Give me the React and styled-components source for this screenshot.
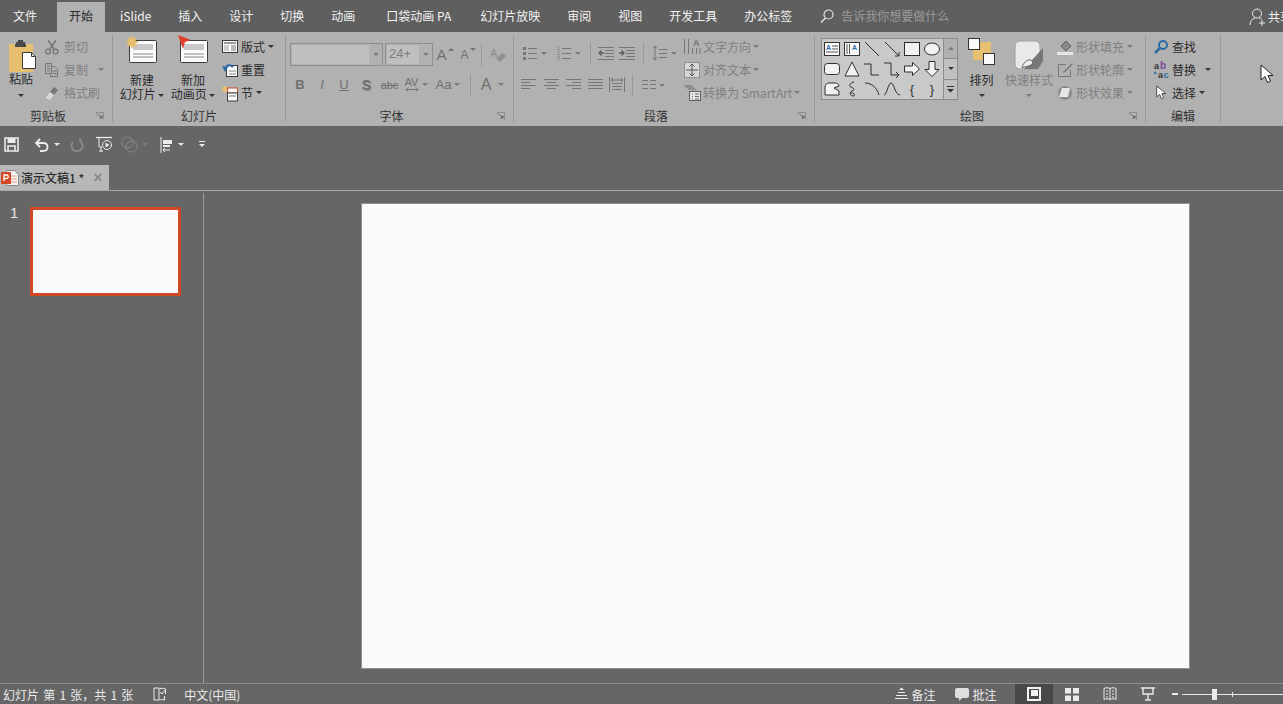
import React from "react";
import styled, { createGlobalStyle } from "styled-components";

const GlobalStyle = createGlobalStyle`
  html, body {
    margin: 0;
    padding: 0;
    height: 704px;
    overflow: hidden;
    background: #666666;
  }
  body {
    font-family: "Noto Sans CJK SC", "Liberation Sans", sans-serif;
    font-size: 12px;
  }
  svg { display: block; flex: none; }
`;

const Page = styled.div`
  position: relative;
  display: flex;
  flex-direction: column;
  width: 1283px;
  height: 704px;
  overflow: hidden;
  background: #666666;
`;

const TabBar = styled.div`
  display: flex;
  align-items: flex-end;
  height: 32px;
  gap: 3px;
  padding-left: 1px;
  background: #5f5f5f;
  flex: none;
`;

const Tab = styled.div`
  height: 30px;
  line-height: 27px;
  padding: 0 12px;
  margin-left: ${(p) => p.$ml || 0}px;
  margin-right: ${(p) => p.$mr || 0}px;
  color: ${(p) => (p.$active ? "#262626" : "#f2f2f2")};
  background: ${(p) => (p.$active ? "#b1b1b1" : "transparent")};
  white-space: nowrap;
`;

const SearchBox = styled.div`
  display: flex;
  align-items: center;
  gap: 7px;
  margin-left: 13px;
  height: 30px;
  padding-bottom: 3px;
  box-sizing: border-box;
  color: #9b9b9b;
`;

const Share = styled.div`
  display: flex;
  align-items: center;
  gap: 2px;
  margin-left: auto;
  margin-right: -10px;
  height: 30px;
  padding-bottom: 1px;
  box-sizing: border-box;
  color: #f2f2f2;
  width: 44px;
  white-space: nowrap;
`;

const Ribbon = styled.div`
  display: flex;
  height: 94px;
  flex: none;
  background: #b1b1b1;
  color: #2b2b2b;
`;

const Group = styled.div`
  display: flex;
  flex-direction: column;
  width: ${(p) => p.$w}px;
  height: 87px;
  margin-top: 3px;
  border-right: 1px solid #9a9a9a;
  box-sizing: border-box;
  flex: none;
`;

const GroupBody = styled.div`
  display: flex;
  height: 72px;
  flex: none;
`;

const GroupFoot = styled.div`
  display: flex;
  align-items: center;
  height: 15px;
  padding-top: 2px;
  box-sizing: border-box;
`;

const GroupLabel = styled.div`
  flex: 1;
  text-align: center;
  line-height: 15px;
  color: #333333;
`;

const Launcher = styled.div`
  display: flex;
  align-items: center;
  justify-content: flex-start;
  width: ${(p) => (p.$none ? 0 : 16)}px;
`;

const LargeBtn = styled.div`
  display: flex;
  flex-direction: column;
  align-items: center;
  width: ${(p) => p.$w}px;
  margin-left: ${(p) => p.$ml || 0}px;
  padding-right: ${(p) => p.$pr || 0}px;
  box-sizing: border-box;
  flex: none;
  color: ${(p) => (p.$muted ? "#7f7f7f" : "#2b2b2b")};
`;

const LargeIcon = styled.div`
  height: ${(p) => p.$h || 30}px;
  display: flex;
  align-items: flex-end;
  justify-content: center;
`;

const LargeText = styled.div`
  line-height: 14px;
  margin-top: ${(p) => p.$mt ?? 8}px;
  text-align: center;
  white-space: nowrap;
`;

const Col = styled.div`
  display: flex;
  flex-direction: column;
  width: ${(p) => (p.$w ? `${p.$w}px` : "auto")};
  flex: none;
  padding-left: ${(p) => p.$pl || 0}px;
  box-sizing: border-box;
`;

const SmallRow = styled.div`
  display: flex;
  align-items: center;
  height: 23px;
  gap: ${(p) => p.$gap ?? 3}px;
  white-space: nowrap;
  color: ${(p) => (p.$muted ? "#7f7f7f" : "#2b2b2b")};
`;

const IconSlot = styled.div`
  display: flex;
  align-items: center;
  justify-content: center;
  width: ${(p) => p.$w || 16}px;
  flex: none;
`;

const Caret = styled.span`
  display: inline-block;
  flex: none;
  width: 0;
  height: 0;
  vertical-align: middle;
  margin-left: ${(p) => p.$ml || 0}px;
  border-left: 3px solid transparent;
  border-right: 3px solid transparent;
  border-top: 3px solid ${(p) => (p.$muted ? "#7a7a7a" : p.$light ? "#e6e6e6" : "#333333")};
`;

const ToolRow = styled.div`
  display: flex;
  align-items: center;
  height: ${(p) => p.$h || 23}px;
  margin-top: ${(p) => p.$mt || 0}px;
  padding-left: ${(p) => p.$pl || 0}px;
`;

const ToolBtn = styled.div`
  display: flex;
  align-items: center;
  justify-content: center;
  gap: ${(p) => p.$gap ?? 3}px;
  width: ${(p) => p.$w || 22}px;
  height: 100%;
  flex: none;
  color: #707070;
  font-family: "Liberation Sans", sans-serif;
  font-size: ${(p) => p.$fs || 13}px;
  font-weight: ${(p) => (p.$bold ? 700 : 400)};
  font-style: ${(p) => (p.$italic ? "italic" : "normal")};
  text-decoration: ${(p) => (p.$under ? "underline" : p.$strike ? "line-through" : "none")};
  text-shadow: ${(p) => (p.$shadow ? "1px 1px 1px #8a8a8a" : "none")};
`;

const GrowMark = styled.span`
  display: flex;
  margin-top: -9px;
`;

const AvStack = styled.span`
  display: flex;
  flex-direction: column;
  align-items: center;
  font-size: 11px;
  line-height: 10px;
`;

const ToolSep = styled.div`
  width: 1px;
  height: 22px;
  margin: 0 ${(p) => p.$m ?? 5}px;
  background: #9a9a9a;
  flex: none;
`;

const Combo = styled.div`
  display: flex;
  width: ${(p) => p.$w}px;
  height: 23px;
  margin-right: ${(p) => p.$mr || 0}px;
  border: 1px solid #8e8e8e;
  box-sizing: border-box;
  flex: none;
`;

const ComboField = styled.div`
  flex: 1;
  margin: 1px;
  background: #bfbfbf;
  color: #7c7c7c;
  font-family: "Liberation Sans", sans-serif;
  font-size: 13px;
  line-height: 18px;
  padding-left: 2px;
`;

const ComboArrow = styled.div`
  display: flex;
  align-items: center;
  justify-content: center;
  width: 12px;
`;

const Gallery = styled.div`
  display: flex;
  height: 62px;
  margin: 3px 0 0 6px;
  border: 1px solid #8c8c8c;
  box-sizing: border-box;
  width: 137px;
  flex: none;
`;

const GalleryGrid = styled.div`
  display: grid;
  grid-template-columns: repeat(6, 20px);
  grid-auto-rows: 20px;
  background: #c9c9c9;
  width: 121px;
`;

const GalleryCell = styled.div`
  display: flex;
  align-items: center;
  justify-content: center;
  color: #2e2e2e;
  font-family: "Liberation Sans", sans-serif;
  font-size: 13px;
`;

const GalleryScroll = styled.div`
  display: flex;
  flex-direction: column;
  flex: 1;
  border-left: 1px solid #8c8c8c;
`;

const ScrollCell = styled.div`
  flex: 1;
  display: flex;
  align-items: center;
  justify-content: center;
  background: ${(p) => (p.$off ? "#b1b1b1" : "#c0c0c0")};
  border-top: ${(p) => (p.$first ? "none" : "1px solid #8c8c8c")};
`;

const MouseCursor = styled.div`
  position: absolute;
  left: 1260px;
  top: 64px;
`;

const QuickBar = styled.div`
  display: flex;
  align-items: center;
  height: 37px;
  flex: none;
  padding-left: 4px;
`;

const QuickIcon = styled.div`
  display: flex;
  align-items: center;
  margin-left: ${(p) => p.$ml || 0}px;
  gap: ${(p) => p.$gap || 0}px;
`;

const DocStrip = styled.div`
  display: flex;
  height: 28px;
  flex: none;
  padding-top: 2px;
  box-sizing: border-box;
  border-bottom: 1px solid #a8a8a8;
`;

const DocTab = styled.div`
  display: flex;
  align-items: center;
  width: 109px;
  height: 25px;
  background: #b8b8b8;
  color: #2e2e2e;
  padding-left: 1px;
  box-sizing: border-box;
  font-weight: 500;
`;

const DocName = styled.span`
  margin-left: 2px;
  white-space: nowrap;
`;

const DocClose = styled.span`
  margin-left: 9px;
  color: #8a8a8a;
  font-family: "Liberation Sans", sans-serif;
  font-size: 16px;
  font-weight: 700;
`;

const Main = styled.div`
  display: flex;
  flex: 1;
  min-height: 0;
`;

const ThumbPane = styled.div`
  display: flex;
  width: 193px;
  margin-top: 2px;
  border-right: 1px solid #9c9c9c;
  padding: 14px 0 0 10px;
  flex: none;
`;

const ThumbNumber = styled.div`
  width: 20px;
  color: #e8e8e8;
  font-family: "Liberation Sans", sans-serif;
  font-size: 15px;
  line-height: 16px;
  margin-top: -2px;
`;

const Thumb = styled.div`
  width: 151px;
  height: 89px;
  background: #fafafa;
  border: 3px solid #d24726;
  box-sizing: border-box;
`;

const Stage = styled.div`
  flex: 1;
  padding: 12px 0 0 157px;
`;

const Slide = styled.div`
  width: 829px;
  height: 466px;
  background: #fafafa;
  border: 1px solid #8f8f8f;
  box-sizing: border-box;
`;

const StatusBar = styled.div`
  display: flex;
  align-items: center;
  height: 21px;
  flex: none;
  padding-left: 3px;
  border-top: 1px solid #8a8a8a;
  color: #ececec;
  box-sizing: border-box;
  white-space: nowrap;
`;

const StatusItem = styled.div`
  display: flex;
  align-items: center;
  gap: 3px;
  margin-left: ${(p) => p.$ml || 0}px;
  word-spacing: ${(p) => p.$ws || 0}px;
`;

const ViewBtn = styled.div`
  display: flex;
  align-items: center;
  justify-content: center;
  width: 38px;
  height: 20px;
  margin-left: ${(p) => p.$ml || 0}px;
  background: ${(p) => (p.$active ? "#484848" : "transparent")};
`;

const ZoomMinus = styled.div`
  width: 6px;
  height: 2px;
  margin-left: 5px;
  background: #ededed;
  flex: none;
`;

const ZoomTrack = styled.div`
  position: relative;
  width: 101px;
  height: 1px;
  margin-left: 4px;
  background: #e8e8e8;
  flex: none;
`;

const ZoomThumb = styled.div`
  position: absolute;
  left: 30px;
  top: -5px;
  width: 5px;
  height: 11px;
  background: #ededed;
`;

const ZoomTick = styled.div`
  position: absolute;
  left: 50px;
  top: -2px;
  width: 1px;
  height: 5px;
  background: #e8e8e8;
`;

const G = "#767676";
const L = "#ececec";

const Svg = ({ w = 16, h = 16, children }) => (
  <svg width={w} height={h} viewBox={`0 0 ${w} ${h}`} fill="none">
    {children}
  </svg>
);

const LauncherIcon = () => (
  <Svg w={8} h={8}>
    <path d="M0.5 0.5h7v7M0.5 0.5v3M0.5 0.5h3" stroke="#8c8c8c" />
    <path d="M2.5 2.5l3 3M6 3.5V6H3.5" stroke="#555" />
  </Svg>
);

const PasteIcon = () => (
  <Svg w={30} h={33}>
    <rect x="3" y="4" width="24" height="28" fill="#e6c06f" />
    <path d="M10 4V2h2V0h5v2h2v2h1v3H9V4z" fill="#4a4a4a" />
    <path d="M16.5 12.5h9l4 4v12h-13z" fill="#fff" stroke="#3a3a3a" />
    <path d="M25.5 12.5v4h4" stroke="#3a3a3a" />
  </Svg>
);

const CutIcon = () => (
  <Svg>
    <path d="M4 1l6 9M12 1L6 10" stroke={G} strokeWidth="1.5" />
    <circle cx="4" cy="12.5" r="2.4" stroke={G} strokeWidth="1.3" />
    <circle cx="11.5" cy="12.5" r="2.4" stroke={G} strokeWidth="1.3" />
  </Svg>
);

const CopyIcon = () => (
  <Svg>
    <path d="M1.5 1.5h6v10h-6zM7.5 4.5h3l3 3v7h-7v-3" stroke={G} fill="#b1b1b1" />
    <path d="M3 4h3M3 6.5h3M3 9h3M8.5 9h4M8.5 11.5h4" stroke={G} />
  </Svg>
);

const BrushIcon = () => (
  <Svg>
    <path d="M10 2l4 3-4 5-4-3z" fill={G} />
    <path d="M6 7l4 3-4 5-5-2c2-1 3-3 5-6z" fill="#d8d8d8" />
  </Svg>
);

const SlideBase = () => (
  <>
    <rect x="5.5" y="5.5" width="27" height="22" rx="1" fill="#fafafa" stroke="#3c3c3c" />
    <rect x="9" y="9" width="20" height="6" fill="#c9c9c9" />
    <path d="M9 19h20M9 22h20" stroke="#8a8a8a" />
  </>
);

const NewSlideIcon = () => (
  <Svg w={36} h={30}>
    <SlideBase />
    <path d="M8 0l1.6 3.6L13 2l-1.6 3.6L15 7l-3.6 1.4L13 12 9.6 10.4 8 14l-1.6-3.6L3 12l1.6-3.6L1 7l3.6-1.4L3 2l3.4 1.6z" fill="#e6c06f" />
  </Svg>
);

const NewAnimIcon = () => (
  <Svg w={36} h={30}>
    <SlideBase />
    <path d="M3 0l13 5-6 2-2 7z" fill="#e2402b" />
  </Svg>
);

const LayoutIcon = () => (
  <Svg>
    <rect x="0.5" y="1.5" width="15" height="12" fill="#fafafa" stroke="#3a3a3a" />
    <rect x="2" y="3" width="12" height="2" fill="#9a9a9a" />
    <rect x="2" y="6" width="5" height="6" fill="#cfcfcf" />
    <path d="M9 7h5M9 9h5M9 11h5" stroke="#777" />
  </Svg>
);

const ResetIcon = () => (
  <Svg>
    <rect x="4.5" y="3.5" width="11" height="11" fill="#fafafa" stroke="#3a3a3a" />
    <path d="M7 9h7M7 12h7" stroke="#888" />
    <path d="M11 5c-3-3-6-2-7 1" stroke="#2b6aa5" strokeWidth="2" />
    <path d="M0 4l6 1-3 5z" fill="#2b6aa5" />
  </Svg>
);

const SectionIcon = () => (
  <Svg w={16} h={18}>
    <path d="M3 1l1 2 2-1-1 2 2 1-2 1 1 2-2-1-1 2-1-2-2 1 1-2-2-1 2-1-1-2 2 1z" fill="#e6c06f" />
    <rect x="5.5" y="4" width="10" height="5" fill="#fafafa" stroke="#c8502d" />
    <rect x="5.5" y="9" width="10" height="8" fill="#fafafa" stroke="#3a3a3a" />
    <path d="M7 12h7" stroke="#777" />
  </Svg>
);

const ClearIcon = () => (
  <Svg w={18} h={18}>
    <text x="1" y="11" fontSize="11" fill="#8a8a8a" fontFamily="Liberation Sans">A</text>
    <path d="M7 13l6-6 4 3-6 6z" fill="#8f8f8f" />
  </Svg>
);

const GrowIcon = ({ down }) => (
  <Svg w={6} h={4}>
    <path d={down ? "M0 0h6L3 3z" : "M0 3h6L3 0z"} fill={G} />
  </Svg>
);

const lines = (rows) => rows.map((d, i) => <path key={i} d={d} stroke={G} />);

const BulletIcon = () => (
  <Svg>
    {[3, 8, 13].map((y) => (
      <rect key={y} x="1" y={y - 1} width="3" height="3" fill={G} />
    ))}
    {lines(["M6 3.5h9", "M6 8.5h9", "M6 13.5h9"])}
  </Svg>
);

const NumberIcon = () => (
  <Svg>
    <text x="1" y="5" fontSize="5" fill={G} fontFamily="Liberation Sans">1</text>
    <text x="1" y="10" fontSize="5" fill={G} fontFamily="Liberation Sans">2</text>
    <text x="1" y="15" fontSize="5" fill={G} fontFamily="Liberation Sans">3</text>
    {lines(["M6 3.5h9", "M6 8.5h9", "M6 13.5h9"])}
  </Svg>
);

const IndentIcon = ({ out }) => (
  <Svg>
    {lines(["M0 2.5h16", "M7 5.5h9", "M7 8.5h9", "M7 11.5h9", "M0 14.5h16"])}
    <path d={out ? "M6 8H1M3.5 5.5L1 8l2.5 2.5" : "M0 8h5M2.5 5.5L5 8l-2.5 2.5"} stroke="#5d5d5d" strokeWidth="1.3" />
  </Svg>
);

const SpacingIcon = () => (
  <Svg>
    <path d="M3 1v14M1 3.5L3 1l2 2.5M1 12.5L3 15l2-2.5" stroke={G} />
    {lines(["M7 4.5h8", "M7 8.5h8", "M7 12.5h8"])}
  </Svg>
);

const AlignIcon = ({ rows }) => <Svg w={15} h={14}>{lines(rows)}</Svg>;

const DistributeIcon = () => (
  <Svg>
    <path d="M0.5 0v15M15.5 0v15" stroke={G} />
    {lines(["M3 6.5h10", "M3 9.5h10", "M3 12.5h10"])}
    <path d="M2 3h12M4 1L2 3l2 2M12 1l2 2-2 2" stroke={G} />
  </Svg>
);

const ColumnsIcon = () => (
  <Svg w={14} h={14}>
    {lines(["M0 2.5h6", "M8 2.5h6", "M0 6.5h6", "M8 6.5h6", "M0 10.5h6", "M8 10.5h6"])}
  </Svg>
);

const DirectionIcon = () => (
  <Svg w={18} h={18}>
    <text x="10" y="8" fontSize="9" fontWeight="700" fill={G} fontFamily="Liberation Sans">A</text>
    <path d="M1.5 1v15M5.5 1v15M9.5 10v6M13.5 10v6M17 10v6" stroke={G} />
  </Svg>
);

const TextAlignIcon = () => (
  <Svg w={18} h={18}>
    <rect x="1.5" y="1.5" width="15" height="15" fill="#d8d8d8" stroke={G} strokeDasharray="2 1" />
    <path d="M9 3v12M6.5 5.5L9 3l2.5 2.5M6.5 12.5L9 15l2.5-2.5" stroke="#555" />
    <path d="M3 9h12" stroke="#555" />
  </Svg>
);

const SmartArtIcon = () => (
  <Svg w={18} h={18}>
    <path d="M0 1h8l6 5H6z" fill="#8d8d8d" />
    <rect x="6.5" y="7.5" width="11" height="9" fill="#e8e8e8" stroke="#5f5f5f" />
    <path d="M9 10h1M12 10h4M9 12.5h1M12 12.5h4M9 15h1M12 15h4" stroke="#666" />
  </Svg>
);

const s = { stroke: "#2e2e2e", fill: "none" };
const shapes = [
  <><rect x="1.5" y="2.5" width="15" height="13" fill="#fafafa" stroke="#333" /><text x="3" y="10" fontSize="7" fontWeight="700" fill="#2b6aa5" fontFamily="Liberation Sans">A</text><path d="M9 6h6M9 9h6M3 12h12" stroke="#555" /></>,
  <><rect x="1.5" y="2.5" width="15" height="13" fill="#fafafa" stroke="#333" /><path d="M4 4v10M6.5 4v10" stroke="#555" /><text x="9" y="10" fontSize="7" fontWeight="700" fill="#2b6aa5" fontFamily="Liberation Sans">A</text></>,
  <path d="M2 2l14 14" {...s} />,
  <><path d="M2 2l14 14" {...s} /><path d="M16 12v4h-4" {...s} /></>,
  <rect x="1.5" y="2.5" width="15" height="13" fill="#f2f2f2" stroke="#2e2e2e" />,
  <ellipse cx="9" cy="9" rx="7.5" ry="6" fill="#f2f2f2" stroke="#2e2e2e" />,
  <rect x="1.5" y="3.5" width="15" height="11" rx="3" fill="#f2f2f2" stroke="#2e2e2e" />,
  <path d="M9 2L16 16H2z" fill="#f2f2f2" stroke="#2e2e2e" />,
  <path d="M1 4h7v11h8" {...s} />,
  <><path d="M1 3h7v12h7" {...s} /><path d="M13 12l3 3-3 3" {...s} /></>,
  <path d="M1.5 6h8V2.5l7 6.5-7 6.5V12h-8z" fill="#f2f2f2" stroke="#2e2e2e" />,
  <path d="M6 1.5h6v8h4l-7 7-7-7h4z" fill="#f2f2f2" stroke="#2e2e2e" />,
  <path d="M2 15V7c0-2 2-4 4-4h6c2 0 4 1 4 3l-5 2 5 3v4z" fill="#f2f2f2" stroke="#2e2e2e" />,
  <path d="M11 2C7 3 5 6 8 7s4 3 1 4-2 5 1 5 1-4-2-3" {...s} />,
  <path d="M2 3c7 0 12 5 14 12" {...s} />,
  <path d="M1 15C4 15 5 3 8 3s4 12 9 12" {...s} />,
  "{",
  "}",
];

const BucketIcon = () => (
  <Svg>
    <path d="M4 7l5-5 5 5-5 5z" fill="#8a8a8a" stroke="#5d5d5d" />
    <path d="M0 13h16v3H0z" fill="#e6e6e6" />
  </Svg>
);

const OutlineIcon = () => (
  <Svg>
    <path d="M13.5 8v6.5h-12v-12H9" stroke={G} />
    <path d="M15 1l1 1-8 8-2 1 1-2z" fill={G} />
  </Svg>
);

const EffectIcon = () => (
  <Svg>
    <circle cx="8" cy="8" r="7" fill="#8a8a8a" />
    <path d="M5 3h8l-2 9H2z" fill="#e8e8e8" />
  </Svg>
);

const ArrangeIcon = () => (
  <Svg w={28} h={28}>
    <rect x="5" y="4" width="18" height="18" fill="#e6c06f" />
    <rect x="0.5" y="0.5" width="11" height="11" fill="#fafafa" stroke="#333" />
    <rect x="15.5" y="15.5" width="11" height="11" fill="#fafafa" stroke="#333" />
  </Svg>
);

const QuickStyleIcon = () => (
  <Svg w={30} h={30}>
    <rect x="1" y="1" width="25" height="28" rx="5" fill="#e9e9e9" stroke="#a0a0a0" />
    <path d="M29 8L18 20l-8 9h14l5-8z" fill="#777" />
    <path d="M8 28c1-5 5-9 9-8 2 1 2 4 0 5-3 2-6 1-9 3z" fill="#ededed" stroke="#666" />
  </Svg>
);

const FindIcon = () => (
  <Svg>
    <circle cx="10" cy="6" r="4" stroke="#2b6aa5" strokeWidth="2" />
    <path d="M7 9l-5 5" stroke="#2b6aa5" strokeWidth="2.5" />
  </Svg>
);

const ReplaceIcon = () => (
  <Svg w={16} h={18}>
    <text x="1" y="8" fontSize="9" fontWeight="700" fill="#333" fontFamily="Liberation Sans">a</text>
    <text x="7" y="8" fontSize="10" fontWeight="700" fill="#7a3f98" fontFamily="Liberation Sans">b</text>
    <path d="M4 12H1M2.5 10.5L1 12l1.5 1.5" stroke="#2b6aa5" />
    <text x="5" y="17" fontSize="9" fontWeight="700" fill="#333" fontFamily="Liberation Sans">a</text>
    <text x="10.5" y="17" fontSize="9" fontWeight="700" fill="#2b6aa5" fontFamily="Liberation Sans">c</text>
  </Svg>
);

const ArrowCursor = ({ w = 15, h = 20 }) => (
  <svg width={w} height={h} viewBox="0 0 15 20" fill="none">
    <path d="M1 1v15l4-3.5 2.5 6 3-1.3-2.5-5.7h5z" fill="#fff" stroke="#222" />
  </svg>
);

const SearchIcon = ({ color = "#e6e6e6", w = 14 }) => (
  <svg width={w} height={w} viewBox="0 0 14 14" fill="none">
    <circle cx="8.5" cy="5.5" r="4.5" stroke={color} strokeWidth="1.2" />
    <path d="M5.5 9L1 13.5" stroke={color} strokeWidth="1.4" />
  </svg>
);

const ShareIcon = () => (
  <Svg w={17} h={18}>
    <circle cx="8" cy="5.5" r="4.5" stroke={L} />
    <path d="M1 17c0-4 2-6 5-7M10 10c1 0 2 .5 3 1.5" stroke={L} />
    <path d="M10 15h6M13 12v6" stroke={L} />
  </Svg>
);

const SaveIcon = () => (
  <Svg w={15} h={15}>
    <path d="M1 1h13v13H1z" stroke={L} strokeWidth="1.6" />
    <path d="M3.5 1h8v5h-8z" fill={L} />
    <path d="M4 14v-5h7v5" stroke={L} strokeWidth="1.6" />
  </Svg>
);

const UndoIcon = () => (
  <Svg w={15} h={14}>
    <path d="M2 5h7c6 0 6 8 0 8H6" stroke={L} strokeWidth="1.8" />
    <path d="M6 1L2 5l4 4" stroke={L} strokeWidth="1.8" />
  </Svg>
);

const RedoIcon = () => (
  <Svg w={14} h={14}>
    <path d="M9 2.5A5.5 5.5 0 1 1 3 4" stroke="#8a8a8a" strokeWidth="1.8" />
    <path d="M9 0l3 1-2 4z" fill="#8a8a8a" />
  </Svg>
);

const PlayIcon = () => (
  <Svg w={17} h={17}>
    <path d="M0 1.5h16" stroke={L} strokeWidth="1.3" />
    <path d="M3 2v9h3" stroke={L} />
    <circle cx="11" cy="9" r="4.5" stroke={L} />
    <path d="M9.5 6.5L13.5 9l-4 2.5z" fill={L} />
    <path d="M5 11v5M3 15h4" stroke={L} />
  </Svg>
);

const MergeIcon = () => (
  <Svg w={17} h={17}>
    <circle cx="6.5" cy="6.5" r="5.5" stroke="#8a8a8a" />
    <circle cx="10.5" cy="10.5" r="5.5" stroke="#8a8a8a" />
  </Svg>
);

const AlignLeftIcon = () => (
  <Svg w={14} h={16}>
    <path d="M1 0v16" stroke={L} />
    <path d="M3 3h9v4H3z" fill={L} />
    <path d="M3 8h7v2H3z" fill={L} />
    <path d="M10 13H3M5 11l-2 2 2 2" stroke={L} />
  </Svg>
);

const CustomizeIcon = () => (
  <Svg w={6} h={7}>
    <path d="M0 0.5h6" stroke={L} />
    <path d="M0 3h6L3 6z" fill={L} />
  </Svg>
);

const ScrollMoreIcon = () => (
  <Svg w={7} h={7}>
    <path d="M0 0.5h7" stroke="#333" />
    <path d="M0 3h7L3.5 6.5z" fill="#333" />
  </Svg>
);

const PptIcon = () => (
  <Svg w={18} h={16}>
    <path d="M5.5 0.5h8l4 4v11h-12z" fill="#f4f4f4" stroke="#888" />
    <path d="M8 6h8M10 9h6M10 12h6" stroke="#e8a07f" />
    <rect x="0" y="2" width="10" height="12" fill="#d24726" />
    <path d="M3 11V5h2.5a1.5 1.5 0 0 1 0 3.5H3" stroke="#fff" strokeWidth="1.3" />
  </Svg>
);

const ReadCheckIcon = () => (
  <Svg w={14} h={14}>
    <path d="M1 1h5v12H1zM6.5 2c2-1 4-1 6 0v5M6.5 13c1-.5 3-.5 5 0V9" stroke={L} />
    <path d="M7 5l2 2 4-5" stroke={L} />
  </Svg>
);

const NotesIcon = () => (
  <Svg w={13} h={14}>
    <path d="M4 3l2.5-2.5L9 3z" fill={L} />
    <path d="M3 5.5h7M1 8.5h11M0 11.5h13" stroke={L} />
  </Svg>
);

const CommentIcon = () => (
  <Svg w={14} h={15}>
    <path d="M2 1h10a2 2 0 0 1 2 2v6a2 2 0 0 1-2 2H7l-3 3v-3H2a2 2 0 0 1-2-2V3a2 2 0 0 1 2-2z" fill="#dedede" />
  </Svg>
);

const NormalViewIcon = () => (
  <Svg w={14} h={14}>
    <rect x="1" y="1" width="12" height="12" fill="none" stroke="#f2f2f2" strokeWidth="2" />
    <rect x="4" y="3" width="7" height="6" fill="#f2f2f2" />
  </Svg>
);

const SorterIcon = () => (
  <Svg w={14} h={13}>
    <rect width="6" height="5.5" fill={L} />
    <rect x="8" width="6" height="5.5" fill={L} />
    <rect y="7.5" width="6" height="5.5" fill={L} />
    <rect x="8" y="7.5" width="6" height="5.5" fill={L} />
  </Svg>
);

const ReaderIcon = () => (
  <Svg w={14} h={14}>
    <path d="M1 1.5c2-1 4-1 6 0 2-1 4-1 6 0v11c-2-1-4-1-6 0-2-1-4-1-6 0z" stroke={L} />
    <path d="M7 1.5v11M3 4h2M3 7h2M3 10h2M9 4h2M9 7h2M9 10h2" stroke={L} />
  </Svg>
);

const ShowIcon = () => (
  <Svg w={14} h={14}>
    <path d="M0 1h14M2 1v6h10V1M7 7v5M4 13h6" stroke={L} strokeWidth="1.4" />
  </Svg>
);

const AvArrow = () => (
  <Svg w={14} h={5}>
    <path d="M1 2.5h12M3 0.5l-2 2 2 2M11 0.5l2 2-2 2" stroke={G} />
  </Svg>
);

const SmallTool = ({ icon, text, muted, caret, slot = 16, gap = 3, caretMl = 0 }) => (
  <SmallRow $muted={muted} $gap={gap}>
    <IconSlot $w={slot}>{icon}</IconSlot>
    <span>{text}</span>
    {caret && <Caret $muted={muted} $ml={caretMl} />}
  </SmallRow>
);

const Foot = ({ label, launcher = true }) => (
  <GroupFoot>
    <GroupLabel>{label}</GroupLabel>
    <Launcher $none={!launcher}>{launcher && <LauncherIcon />}</Launcher>
  </GroupFoot>
);

const tabs = [
  { t: "文件" },
  { t: "开始", active: true, ml: 5 },
  { t: "iSlide" },
  { t: "插入" },
  { t: "设计" },
  { t: "切换" },
  { t: "动画" },
  { t: "口袋动画 PA", ml: 4, mr: 2 },
  { t: "幻灯片放映" },
  { t: "审阅" },
  { t: "视图" },
  { t: "开发工具" },
  { t: "办公标签" },
];

const ALIGN = {
  left: ["M0 1.5h15", "M0 4.5h9", "M0 7.5h15", "M0 10.5h9"],
  center: ["M0 1.5h15", "M3 4.5h9", "M0 7.5h15", "M3 10.5h9"],
  right: ["M0 1.5h15", "M6 4.5h9", "M0 7.5h15", "M6 10.5h9"],
  full: ["M0 1.5h15", "M0 4.5h15", "M0 7.5h15", "M0 10.5h15"],
};

export default function App() {
  return (
    <Page>
      <GlobalStyle />
      <TabBar>
        {tabs.map((tab) => (
          <Tab key={tab.t} $active={tab.active} $ml={tab.ml} $mr={tab.mr}>{tab.t}</Tab>
        ))}
        <SearchBox>
          <SearchIcon />
          <span>告诉我你想要做什么</span>
        </SearchBox>
        <Share>
          <ShareIcon />
          <span>共享</span>
        </Share>
      </TabBar>

      <Ribbon>
        <Group $w={113}>
          <GroupBody>
            <LargeBtn $w={44} $pr={2}>
              <LargeIcon $h={38}><PasteIcon /></LargeIcon>
              <LargeText $mt={-1}>粘贴</LargeText>
              <LargeText $mt={1}><Caret /></LargeText>
            </LargeBtn>
            <Col>
              <SmallTool icon={<CutIcon />} text="剪切" muted gap={4} />
              <SmallTool icon={<CopyIcon />} text="复制" muted caret caretMl={6} gap={4} />
              <SmallTool icon={<BrushIcon />} text="格式刷" muted gap={4} />
            </Col>
          </GroupBody>
          <Foot label="剪贴板" />
        </Group>

        <Group $w={173}>
          <GroupBody>
            <LargeBtn $w={52} $ml={3}>
              <LargeIcon><NewSlideIcon /></LargeIcon>
              <LargeText>新建</LargeText>
              <LargeText $mt={0}>幻灯片 <Caret /></LargeText>
            </LargeBtn>
            <LargeBtn $w={48} $ml={1}>
              <LargeIcon><NewAnimIcon /></LargeIcon>
              <LargeText>新加</LargeText>
              <LargeText $mt={0}>动画页 <Caret /></LargeText>
            </LargeBtn>
            <Col $pl={5}>
              <SmallTool icon={<LayoutIcon />} text="版式" caret />
              <SmallTool icon={<ResetIcon />} text="重置" />
              <SmallTool icon={<SectionIcon />} text="节" caret />
            </Col>
          </GroupBody>
          <Foot label="幻灯片" launcher={false} />
        </Group>

        <Group $w={228}>
          <GroupBody>
            <Col>
              <ToolRow $mt={8} $pl={4}>
                <Combo $w={93} $mr={2}>
                  <ComboField />
                  <ComboArrow><Caret $muted /></ComboArrow>
                </Combo>
                <Combo $w={48}>
                  <ComboField>24+</ComboField>
                  <ComboArrow><Caret $muted /></ComboArrow>
                </Combo>
                <ToolBtn $fs={15} $w={24} $gap={1}>A<GrowMark><GrowIcon /></GrowMark></ToolBtn>
                <ToolBtn $fs={12} $w={22} $gap={1}>A<GrowMark><GrowIcon down /></GrowMark></ToolBtn>
                <ToolSep $m={2} />
                <ToolBtn $w={28}><ClearIcon /></ToolBtn>
              </ToolRow>
              <ToolRow $mt={7} $pl={3}>
                <ToolBtn $bold>B</ToolBtn>
                <ToolBtn $italic>I</ToolBtn>
                <ToolBtn $under>U</ToolBtn>
                <ToolBtn $bold $fs={14} $w={23} $shadow>S</ToolBtn>
                <ToolBtn $fs={11} $w={23} $strike>abc</ToolBtn>
                <ToolBtn $w={30}>
                  <AvStack>AV<AvArrow /></AvStack>
                  <Caret $muted />
                </ToolBtn>
                <ToolBtn $w={34}>Aa<Caret $muted /></ToolBtn>
                <ToolSep $m={5} />
                <ToolBtn $fs={16} $w={33}>A<Caret $muted $ml={4} /></ToolBtn>
              </ToolRow>
            </Col>
          </GroupBody>
          <Foot label="字体" />
        </Group>

        <Group $w={301}>
          <GroupBody>
            <Col $w={168} $pl={3}>
              <ToolRow $mt={7} $h={22}>
                <ToolBtn $w={34}><BulletIcon /><Caret $muted /></ToolBtn>
                <ToolBtn $w={34}><NumberIcon /><Caret $muted /></ToolBtn>
                <ToolSep $m={5} />
                <ToolBtn $w={20}><IndentIcon out /></ToolBtn>
                <ToolBtn $w={22}><IndentIcon /></ToolBtn>
                <ToolSep $m={5} />
                <ToolBtn $w={30}><SpacingIcon /><Caret $muted /></ToolBtn>
              </ToolRow>
              <ToolRow $mt={10} $h={22}>
                <ToolBtn $w={23}><AlignIcon rows={ALIGN.left} /></ToolBtn>
                <ToolBtn $w={22}><AlignIcon rows={ALIGN.center} /></ToolBtn>
                <ToolBtn $w={22}><AlignIcon rows={ALIGN.right} /></ToolBtn>
                <ToolBtn $w={22}><AlignIcon rows={ALIGN.full} /></ToolBtn>
                <ToolBtn $w={22}><DistributeIcon /></ToolBtn>
                <ToolSep $m={4} />
                <ToolBtn $w={32}><ColumnsIcon /><Caret $muted /></ToolBtn>
              </ToolRow>
            </Col>
            <Col $pl={1}>
              <SmallTool icon={<DirectionIcon />} text="文字方向" muted caret slot={18} gap={2} />
              <SmallTool icon={<TextAlignIcon />} text="对齐文本" muted caret slot={18} gap={2} />
              <SmallTool icon={<SmartArtIcon />} text="转换为 SmartArt" muted caret slot={18} gap={2} />
            </Col>
          </GroupBody>
          <Foot label="段落" />
        </Group>

        <Group $w={331}>
          <GroupBody>
            <Gallery>
              <GalleryGrid>
                {shapes.map((shape, i) => (
                  <GalleryCell key={i}>
                    {typeof shape === "string" ? shape : <Svg w={18} h={18}>{shape}</Svg>}
                  </GalleryCell>
                ))}
              </GalleryGrid>
              <GalleryScroll>
                <ScrollCell $first $off><GrowIcon /></ScrollCell>
                <ScrollCell><Caret /></ScrollCell>
                <ScrollCell><ScrollMoreIcon /></ScrollCell>
              </GalleryScroll>
            </Gallery>
            <LargeBtn $w={47}>
              <LargeIcon $h={31}><ArrangeIcon /></LargeIcon>
              <LargeText $mt={7}>排列</LargeText>
              <LargeText $mt={0}><Caret /></LargeText>
            </LargeBtn>
            <LargeBtn $w={48} $muted>
              <LargeIcon $h={35}><QuickStyleIcon /></LargeIcon>
              <LargeText $mt={3}>快速样式</LargeText>
              <LargeText $mt={0}><Caret $muted /></LargeText>
            </LargeBtn>
            <Col $pl={4}>
              <SmallTool icon={<BucketIcon />} text="形状填充" muted caret />
              <SmallTool icon={<OutlineIcon />} text="形状轮廓" muted caret />
              <SmallTool icon={<EffectIcon />} text="形状效果" muted caret />
            </Col>
          </GroupBody>
          <Foot label="绘图" />
        </Group>

        <Group $w={75}>
          <GroupBody>
            <Col $pl={7}>
              <SmallTool icon={<FindIcon />} text="查找" />
              <SmallTool icon={<ReplaceIcon />} text="替换" caret caretMl={6} />
              <SmallTool icon={<ArrowCursor w={11} h={15} />} text="选择" caret />
            </Col>
          </GroupBody>
          <Foot label="编辑" launcher={false} />
        </Group>
      </Ribbon>

      <MouseCursor><ArrowCursor /></MouseCursor>

      <QuickBar>
        <QuickIcon><SaveIcon /></QuickIcon>
        <QuickIcon $ml={15} $gap={5}><UndoIcon /><Caret $light /></QuickIcon>
        <QuickIcon $ml={10}><RedoIcon /></QuickIcon>
        <QuickIcon $ml={12}><PlayIcon /></QuickIcon>
        <QuickIcon $ml={8} $gap={4}><MergeIcon /><Caret $muted /></QuickIcon>
        <QuickIcon $ml={12} $gap={4}><AlignLeftIcon /><Caret $light /></QuickIcon>
        <QuickIcon $ml={15}><CustomizeIcon /></QuickIcon>
      </QuickBar>

      <DocStrip>
        <DocTab>
          <PptIcon />
          <DocName>演示文稿1 *</DocName>
          <DocClose>×</DocClose>
        </DocTab>
      </DocStrip>

      <Main>
        <ThumbPane>
          <ThumbNumber>1</ThumbNumber>
          <Thumb />
        </ThumbPane>
        <Stage>
          <Slide />
        </Stage>
      </Main>

      <StatusBar>
        <StatusItem $ws={1.5}>幻灯片 第 1 张，共 1 张</StatusItem>
        <StatusItem $ml={20}><ReadCheckIcon /></StatusItem>
        <StatusItem $ml={17}>中文(中国)</StatusItem>
        <StatusItem $ml={655}><NotesIcon />备注</StatusItem>
        <StatusItem $ml={20}><CommentIcon />批注</StatusItem>
        <ViewBtn $ml={19} $active><NormalViewIcon /></ViewBtn>
        <ViewBtn><SorterIcon /></ViewBtn>
        <ViewBtn><ReaderIcon /></ViewBtn>
        <ViewBtn><ShowIcon /></ViewBtn>
        <ZoomMinus />
        <ZoomTrack>
          <ZoomThumb />
          <ZoomTick />
        </ZoomTrack>
      </StatusBar>
    </Page>
  );
}
